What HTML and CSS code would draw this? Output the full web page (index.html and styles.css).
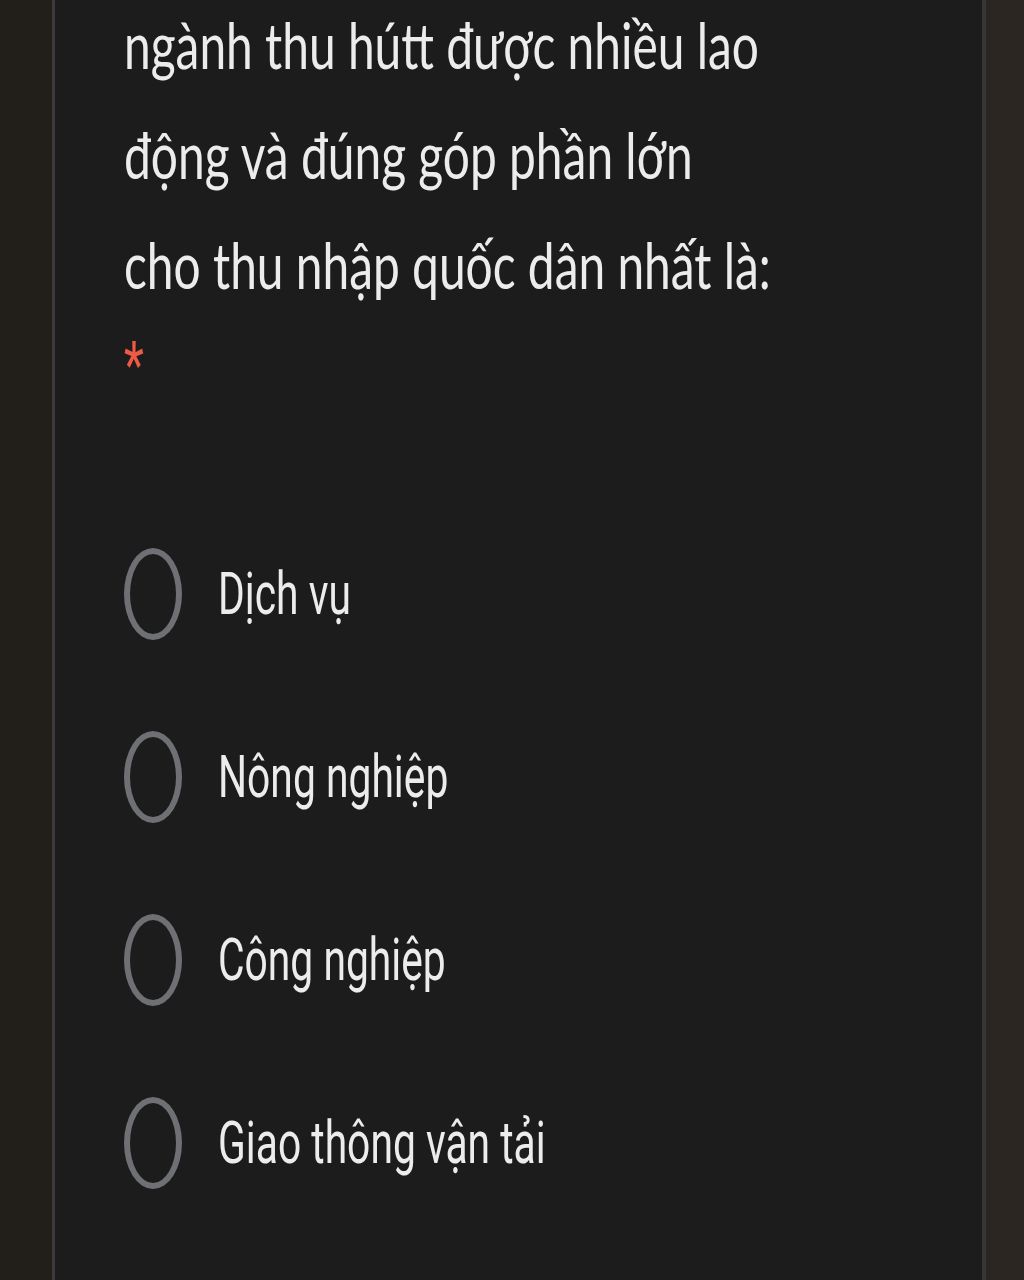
FILE: index.html
```html
<!DOCTYPE html>
<html lang="vi">
<head>
    <meta charset="UTF-8">
    <meta name="viewport" content="width=device-width, initial-scale=1.0">
    <title>Câu hỏi</title>
    <link rel="stylesheet" href="styles.css">
</head>
<body>
    <div class="page">
        <div class="gutter gutter-left"></div>
        <div class="card">
            <div class="question">
                <div class="title">
                    <span class="squeeze">ngành thu hútt được nhiều lao</span><br>
                    <span class="squeeze">động và đúng góp phần lớn</span><br>
                    <span class="squeeze">cho thu nhập quốc dân nhất là:</span>
                </div>
                <div class="required"><span class="squeeze">*</span></div>
            </div>

            <div class="options">
                <label class="option">
                    <span class="radio"></span>
                    <span class="label"><span class="squeeze">Dịch vụ</span></span>
                </label>
                <label class="option">
                    <span class="radio"></span>
                    <span class="label"><span class="squeeze">Nông nghiệp</span></span>
                </label>
                <label class="option">
                    <span class="radio"></span>
                    <span class="label"><span class="squeeze">Công nghiệp</span></span>
                </label>
                <label class="option">
                    <span class="radio"></span>
                    <span class="label"><span class="squeeze">Giao thông vận tải</span></span>
                </label>
            </div>
        </div>
        <div class="gutter gutter-right"></div>
    </div>
</body>
</html>
```

FILE: styles.css
```css
body {
    margin: 0;
    background-color: #221e1a;
    font-family: Roboto, 'Noto Sans', sans-serif;
    color: #ececec;
}
.page {
    display: flex;
    min-height: 1280px;
    overflow: hidden;
}
.gutter {
    flex: none;
}
.gutter-left {
    width: 52px;
    background-color: #221e1a;
}
.gutter-right {
    flex: 1;
    background-color: #2b2621;
}
.card {
    flex: none;
    width: 934px;
    background-color: #1c1c1c;
    border-left: 3px solid #3a3a3a;
    border-right: 4px solid #363636;
    padding-left: 69px;
    box-sizing: border-box;
}
.squeeze {
    display: inline-block;
    white-space: nowrap;
    transform-origin: left center;
}
.question {
    margin-top: -10px;
}
.title {
    font-family: Lato, Roboto, sans-serif;
    font-size: 64px;
    line-height: 110px;
    white-space: nowrap;
}
.title .squeeze {
    transform: scaleX(0.748);
}
.required {
    color: #ee5a46;
    font-size: 64px;
    line-height: 60px;
    height: 60px;
    margin-top: 16px;
}
.required .squeeze {
    transform: scaleX(0.72);
}
.options {
    margin-top: 106px;
    display: flex;
    flex-direction: column;
}
.option {
    display: flex;
    align-items: center;
    height: 183px;
}
.radio {
    flex: none;
    width: 58px;
    height: 92px;
    border: 6px solid #6e7074;
    border-radius: 50%;
    box-sizing: border-box;
}
.label {
    margin-left: 36px;
    font-size: 60px;
    line-height: 80px;
}
.label .squeeze {
    transform: scaleX(0.68);
}
```
